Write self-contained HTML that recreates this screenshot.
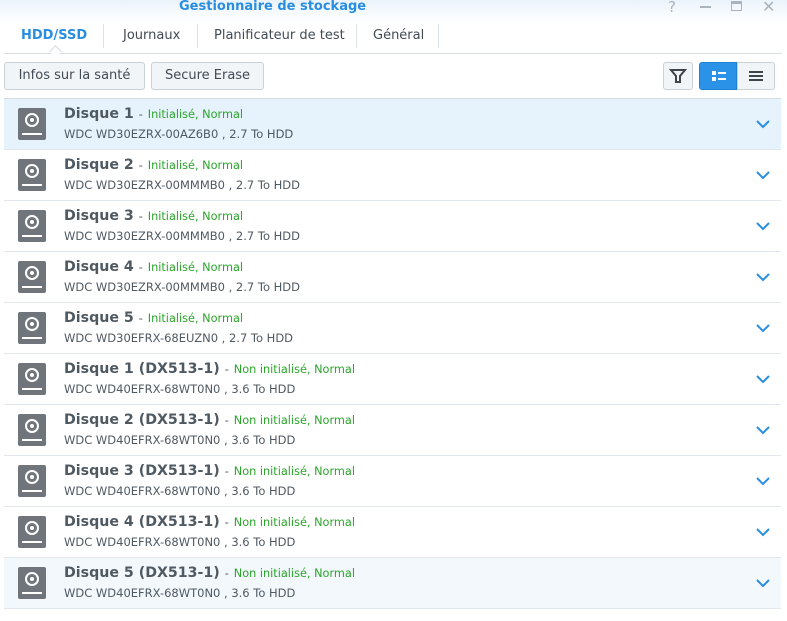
<!DOCTYPE html><html><head><style>
body{margin:0;width:787px;height:621px;background:#fff;font-family:"DejaVu Sans",Verdana,sans-serif;position:relative;overflow:hidden}
.top{position:absolute;left:0;top:0;width:787px;height:54px;background:linear-gradient(#eaf3fb,#fff 40%)}
.title{position:absolute;left:179px;top:-1px;font-size:13px;font-weight:bold;color:#2a8ee0}
.wc{position:absolute;top:-2px;font-size:15px;color:#aab4be}
.tabs{position:absolute;left:4px;top:20px;height:33px;width:778px;border-bottom:1px solid #d6dce2}
.tab{position:absolute;top:8px;font-size:13px;color:#414b55}
.sep{position:absolute;top:4px;width:1px;height:24px;background:#dde2e7}
.btn{position:absolute;top:62px;height:26px;border:1px solid #c8d0d8;border-radius:3px;background:#f2f5f8;font-size:13px;color:#414b55;line-height:26px;text-align:center}
.row{position:absolute;left:4px;width:777px;height:50px;border-bottom:1px solid #e1e7ec}
.ic{position:absolute;left:14px;top:9px;width:28px;height:32px;background:#6f757b;border-radius:2px}
.ic:before{content:"";position:absolute;left:7px;top:5px;width:10px;height:10px;border:2px solid #fff;border-radius:50%}
.ic:after{content:"";position:absolute;left:4px;top:25px;width:20px;height:2px;background:#fff}
.ic i{position:absolute;left:12px;top:10px;width:4px;height:4px;background:#fff;border-radius:50%;z-index:1}
.t{position:absolute;left:60px;top:7px;font-size:14.2px;font-weight:bold;color:#4f5962}
.t span{font-weight:normal;font-size:11.3px;color:#2aa52a}
.t b{font-weight:normal;font-size:11.3px;color:#4f5962}
.s{position:absolute;left:60px;top:28px;font-size:11.5px;color:#4f5962}
.ch{position:absolute;left:752px;top:20px}
</style></head><body>
<div class="top"></div>
<div class="title">Gestionnaire de stockage</div>
<div class="wc" style="left:668px">?</div>
<div style="position:absolute;left:700px;top:6px;width:11px;height:2px;background:#aab4be"></div>
<div style="position:absolute;left:731px;top:1px;width:9px;height:6px;border:1px solid #aab4be;border-top-width:3px"></div>
<div class="wc" style="left:762px;top:-3px;font-size:16px">✕</div>
<div class="tabs">
<div class="tab" style="left:17px;font-weight:bold;color:#2a8ee0">HDD/SSD</div>
<div class="sep" style="left:99px"></div>
<div class="tab" style="left:119px">Journaux</div>
<div class="sep" style="left:193px"></div>
<div class="tab" style="left:210px">Planificateur de test</div>
<div class="sep" style="left:352px"></div>
<div class="tab" style="left:369px">Général</div>
<div class="sep" style="left:434px"></div>
<div style="position:absolute;left:47px;top:27px;width:8px;height:8px;background:#fff;border-left:1px solid #d6dce2;border-top:1px solid #d6dce2;transform:rotate(45deg)"></div>
</div>
<div class="btn" style="left:4px;width:139px">Infos sur la santé</div>
<div class="btn" style="left:151px;width:111px">Secure Erase</div>
<div class="btn" style="left:663px;width:28px"><svg width="28" height="26" viewBox="0 0 28 26"><path d="M7 7h14l-5 6v6h-4v-6z" fill="none" stroke="#3c444c" stroke-width="2"/></svg></div>
<div class="btn" style="left:699px;width:36px;background:#2a93e8;border-color:#1f80d0;border-radius:3px 0 0 3px"><svg width="36" height="26"><rect x="12" y="8" width="4" height="4" fill="#fff"/><rect x="12" y="14" width="4" height="4" fill="#fff"/><rect x="18" y="9" width="8" height="2" fill="#fff"/><rect x="18" y="15" width="8" height="2" fill="#fff"/></svg></div>
<div class="btn" style="left:737px;width:36px;border-radius:0 3px 3px 0"><svg width="36" height="26"><rect x="11" y="8" width="14" height="2" fill="#3c444c"/><rect x="11" y="12" width="14" height="2" fill="#3c444c"/><rect x="11" y="16" width="14" height="2" fill="#3c444c"/></svg></div>
<div style="position:absolute;left:4px;top:98px;width:777px;height:1px;background:#d6dce2"></div>
<div id="list"></div>
<script>
var d=[["Disque 1","Initialisé, Normal","WD30EZRX-00AZ6B0 , 2.7"],["Disque 2","Initialisé, Normal","WD30EZRX-00MMMB0 , 2.7"],["Disque 3","Initialisé, Normal","WD30EZRX-00MMMB0 , 2.7"],["Disque 4","Initialisé, Normal","WD30EZRX-00MMMB0 , 2.7"],["Disque 5","Initialisé, Normal","WD30EFRX-68EUZN0 , 2.7"]];
for(var i=1;i<=5;i++)d.push(["Disque "+i+" (DX513-1)","Non initialisé, Normal","WD40EFRX-68WT0N0 , 3.6"]);
var h="";d.forEach(function(r,i){var bg=i==0?"#e6f2fc":(i==9?"#f3f8fc":"#fff");
h+='<div class="row" style="top:'+(99+i*51)+'px;background:'+bg+'"><div class="ic"><i></i></div><div class="t">'+r[0]+' <b>-</b> <span>'+r[1]+'</span></div><div class="s">WDC '+r[2]+' To HDD</div><svg class="ch" width="14" height="10"><path d="M1 2l6 6 6-6" fill="none" stroke="#2a8ee0" stroke-width="2"/></svg></div>';});
document.getElementById("list").innerHTML=h;
</script>
</body></html>
